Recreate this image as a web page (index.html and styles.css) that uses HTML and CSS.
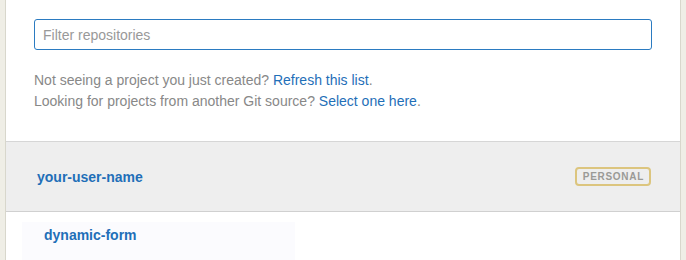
FILE: index.html
```html
<!DOCTYPE html>
<html lang="en">
<head>
    <meta charset="UTF-8">
    <title>Select repository</title>
    <link rel="stylesheet" href="styles.css">
</head>
<body>

<div class="panel">
    <div class="filter">
        <input type="text" class="filter-input" placeholder="Filter repositories">
        <p class="hint">
            Not seeing a project you just created? <a href="#">Refresh this list</a>.<br>
            Looking for projects from another Git source? <a href="#">Select one here</a>.
        </p>
    </div>

    <div class="account">
        <a href="#" class="account-name">your-user-name</a>
        <span class="badge">Personal</span>
    </div>

    <ul class="repos">
        <li class="repo"><a href="#">dynamic-form</a></li>
    </ul>
</div>

</body>
</html>
```

FILE: styles.css
```css
html, body {
    margin: 0;
    height: 100%;
}
body {
    font-family: "Liberation Sans", Arial, sans-serif;
    background-color: #efeee6;
    padding: 0 5px;
    overflow: hidden;
}
.panel {
    background: #fff;
    border-left: 1px solid #d8d7cc;
    border-right: 1px solid #d8d7cc;
    height: 100%;
}
a {
    color: #1f6fb8;
    text-decoration: none;
}
.filter {
    padding: 19px 28px 29px 28px;
}
.filter-input {
    display: block;
    box-sizing: border-box;
    width: 618px;
    height: 31px;
    padding: 0 8px;
    border: 1px solid #2b7bc1;
    border-radius: 3px;
    font-family: inherit;
    font-size: 14px;
    color: #333;
    outline: none;
}
.filter-input::placeholder {
    color: #999;
}
.hint {
    margin: 20px 0 0;
    font-size: 14px;
    line-height: 21px;
    color: #888;
}
.account {
    display: flex;
    align-items: center;
    justify-content: space-between;
    height: 69px;
    padding: 0 29px 0 31px;
    background: #eeeeee;
    border-top: 1px solid #d6d6d6;
    border-bottom: 1px solid #d0d0d0;
}
.account-name {
    font-weight: bold;
    font-size: 14px;
}
.badge {
    border: 2px solid #dcc57e;
    border-radius: 4px;
    padding: 3px 5px 2px 6px;
    font-weight: bold;
    font-size: 10px;
    line-height: 10px;
    letter-spacing: 0.7px;
    text-transform: uppercase;
    color: #9a9a96;
}
.repos {
    list-style: none;
    margin: 0;
    padding: 10px 0 0 16px;
}
.repo {
    width: 251px;
    height: 40px;
    padding: 0 0 0 22px;
    background: #fbfbfe;
    font-size: 14px;
    font-weight: bold;
    line-height: 26px;
}
```
